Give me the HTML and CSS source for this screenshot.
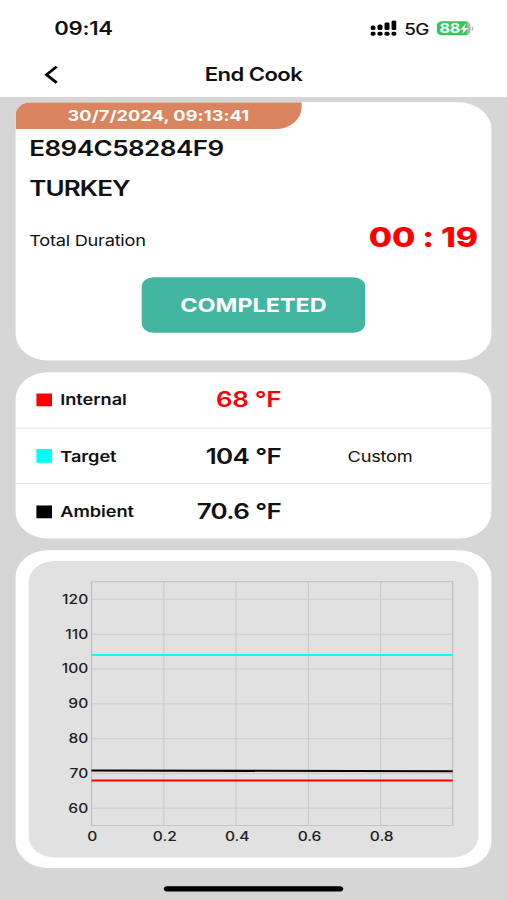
FILE: index.html
```
<!DOCTYPE html>
<html lang="en">
<head>
  <meta charset="UTF-8" />
  <meta name="viewport" content="width=device-width, initial-scale=1.0" />
  <title>End Cook</title>
  <link rel="stylesheet" href="styles.css">
</head>
<body>
  <div class="phone">
    <header>
      <div class="status-bar">
        <span class="clock">09:14</span>
        <svg class="signal" width="20" height="15" viewBox="0 0 20 15">
          <rect x="0" y="5" width="3.8" height="4.2" rx="1.5"/>
          <rect x="5.4" y="4" width="3.8" height="5.2" rx="1.5"/>
          <rect x="10.8" y="2" width="3.8" height="7.2" rx="1.2"/>
          <rect x="16.2" y="0.3" width="3.8" height="8.9" rx="1.2"/>
          <rect x="0" y="10.8" width="3.8" height="3.8" rx="1.4"/>
          <rect x="5.4" y="10.8" width="3.8" height="3.8" rx="1.4"/>
          <rect x="10.8" y="10.8" width="3.8" height="3.8" rx="1.4"/>
          <rect x="16.2" y="10.8" width="3.8" height="3.8" rx="1.4"/>
        </svg>
        <span class="network">5G</span>
        <div class="battery">
          <span>88</span>
          <svg width="6" height="10" viewBox="0 0 6 10"><path d="M4.4 0 0 5.6h2.5L1.6 10 6 4.2H3.5z" fill="#fff"/></svg>
        </div>
        <i class="battery-tip"></i>
      </div>
      <div class="nav-bar">
        <svg class="back" width="11" height="18" viewBox="0 0 11 18"><path d="M9.6 1.4 1.8 9l7.8 7.6" fill="none" stroke="#000" stroke-width="2.4"/></svg>
        <h1>End Cook</h1>
      </div>
    </header>

    <main>
      <section class="card summary">
        <div class="date">30/7/2024, 09:13:41</div>
        <h2 class="device">E894C58284F9</h2>
        <h2 class="meat">TURKEY</h2>
        <div class="duration">
          <span class="duration-label">Total Duration</span>
          <span class="timer">00 : 19</span>
        </div>
        <button>COMPLETED</button>
      </section>

      <section class="card temps">
        <div class="row">
          <i class="swatch red"></i>
          <span class="label">Internal</span>
          <span class="value hot">68 °F</span>
        </div>
        <div class="row">
          <i class="swatch cyan"></i>
          <span class="label">Target</span>
          <span class="value">104 °F</span>
          <span class="preset">Custom</span>
        </div>
        <div class="row">
          <i class="swatch black"></i>
          <span class="label">Ambient</span>
          <span class="value">70.6 °F</span>
        </div>
      </section>

      <section class="card chart-card">
        <svg class="chart" viewBox="0 0 346 278.5">
          <g class="grid">
            <path d="M104 19.6V248M159.6 19.6V248M215.2 19.6V248M270.8 19.6V248"/>
            <path d="M48.4 36H326.2M48.4 68.7H326.2M48.4 101.3H326.2M48.4 134H326.2M48.4 166.7H326.2M48.4 199.3H326.2M48.4 232H326.2"/>
            <path class="frame" d="M48.4 19.6H326.2V248H48.4z"/>
          </g>
          <g class="y-axis">
            <text x="45.9" y="40.2">120</text>
            <text x="45.9" y="72.9">110</text>
            <text x="45.9" y="105.5">100</text>
            <text x="45.9" y="138.2">90</text>
            <text x="45.9" y="170.9">80</text>
            <text x="45.9" y="203.5">70</text>
            <text x="45.9" y="236.2">60</text>
          </g>
          <g class="x-axis">
            <text x="49" y="262.4">0</text>
            <text x="104.8" y="262.4">0.2</text>
            <text x="160.5" y="262.4">0.4</text>
            <text x="216.1" y="262.4">0.6</text>
            <text x="271.6" y="262.4">0.8</text>
          </g>
          <g class="lines">
            <path d="M48.4 88.2H326.2" stroke="#00ffff"/>
            <path d="M48.4 196.5L326.2 197.3" stroke="#000"/>
            <path d="M48.4 205.8H326.2" stroke="#f00"/>
          </g>
        </svg>
      </section>
    </main>

    <div class="home-indicator"></div>
  </div>
</body>
</html>
```
FILE: styles.css
```
html, body {
  margin: 0;
  width: 507px;
  height: 900px;
  overflow: hidden;
}
/* 390x844 screen stretched to fill the window */
.phone {
  width: 390px;
  height: 844px;
  transform: scale(1.3, 1.0664);
  transform-origin: 0 0;
  background: #d6d6d6;
  font-family: Inter, "Liberation Sans", sans-serif;
  color: #111;
  display: flex;
  flex-direction: column;
  align-items: center;
}
header {
  width: 100%;
  height: 91.2px;
  background: #fff;
}
.status-bar {
  display: flex;
  align-items: center;
  height: 47px;
  padding: 3px 26px 0 41.7px;
  box-sizing: border-box;
  margin-top: 2px;
}
.clock {
  font-size: 17px;
  font-weight: 600;
  letter-spacing: -0.2px;
  margin-right: auto;
}
.signal {
  margin-top: -1px;
}
.network {
  font-size: 14.5px;
  font-weight: 500;
  letter-spacing: -0.5px;
  margin: 0 6.5px 0 5.8px;
}
.battery {
  display: flex;
  align-items: center;
  justify-content: center;
  width: 25.5px;
  height: 13.6px;
  margin-top: -1px;
  border-radius: 4px;
  background: linear-gradient(90deg, #34c759 88%, #b5b5b5 88%);
  color: #fff;
  font-size: 12.5px;
  font-weight: 700;
  letter-spacing: -0.3px;
}
.battery-tip {
  width: 1.3px;
  height: 4px;
  margin-left: 1px;
  border-radius: 0 2px 2px 0;
  background: #b5b5b5;
}
.nav-bar {
  display: grid;
  grid-template-columns: 1fr auto 1fr;
  align-items: center;
  height: 42px;
  padding: 0 34px;
}
h1 {
  margin: 0;
  font-size: 17px;
  font-weight: 600;
  letter-spacing: -0.45px;
}
main {
  display: flex;
  flex-direction: column;
  gap: 10.3px;
  width: 366px;
  padding-top: 5.1px;
}
.card {
  background: #fff;
  border-radius: 25px;
  overflow: hidden;
}
.summary {
  display: flex;
  flex-direction: column;
  height: 242.2px;
  border-top-left-radius: 12px;
}
.date {
  width: 219.6px;
  height: 24.8px;
  line-height: 24.4px;
  border-bottom-right-radius: 20px;
  background: #db8560;
  color: #fff;
  font-size: 14px;
  font-weight: 700;
  letter-spacing: 0.05px;
  text-align: center;
}
h2 {
  margin: 0 10.5px;
  font-size: 20px;
  font-weight: 600;
  line-height: 24px;
  letter-spacing: -0.4px;
}
.device {
  margin-top: 5.8px;
}
.meat {
  margin-top: 13.9px;
  letter-spacing: -0.7px;
}
.duration {
  display: flex;
  align-items: center;
  justify-content: space-between;
  height: 32px;
  margin: 17.6px 10.5px 0;
}
.duration-label {
  font-size: 14px;
  padding-top: 7px;
  letter-spacing: -0.2px;
}
.timer {
  color: #f00;
  font-size: 26px;
  font-weight: 800;
  letter-spacing: -0.2px;
}
button {
  align-self: center;
  width: 172.5px;
  height: 51.2px;
  margin-top: 22px;
  padding-top: 3px;
  border: none;
  border-radius: 9px;
  background: #42b6a1;
  color: #fff;
  font-family: inherit;
  font-size: 18px;
  font-weight: 700;
}
.row {
  display: grid;
  grid-template-columns: 12.4px 80px 112px 1fr;
  align-items: center;
  height: 52.2px;
  padding-left: 16px;
  box-sizing: border-box;
}
.row + .row {
  border-top: 1px solid #e6e6e6;
}
.swatch {
  width: 12.4px;
  height: 12.2px;
}
.red { background: #f00; }
.cyan { background: #0ff; }
.black { background: #000; }
.label {
  padding-left: 6px;
  font-size: 14px;
  font-weight: 600;
  letter-spacing: -0.05px;
}
.value {
  padding-right: 16.2px;
  text-align: right;
  font-size: 20px;
  font-weight: 600;
  letter-spacing: -0.5px;
  white-space: nowrap;
}
.hot {
  color: #f00;
  letter-spacing: -0.3px;
}
.preset {
  padding-left: 35px;
  font-size: 14px;
  letter-spacing: -0.2px;
}
.chart-card {
  padding: 9.9px 10px;
}
.chart {
  display: block;
  width: 346px;
  height: 278.5px;
  border-radius: 20px;
  background: #e1e1e1;
}
.grid path {
  fill: none;
  stroke: #cbcbcb;
  stroke-width: 0.9;
}
.grid .frame {
  stroke: #bdbdbd;
}
.chart text {
  font-size: 12px;
  font-weight: 500;
  fill: #222;
}
.y-axis {
  text-anchor: end;
}
.x-axis {
  text-anchor: middle;
}
.lines path {
  fill: none;
  stroke-width: 1.9;
}
.home-indicator {
  width: 138.5px;
  height: 5.2px;
  margin-top: 17.3px;
  border-radius: 3px;
  background: #000;
}
```
